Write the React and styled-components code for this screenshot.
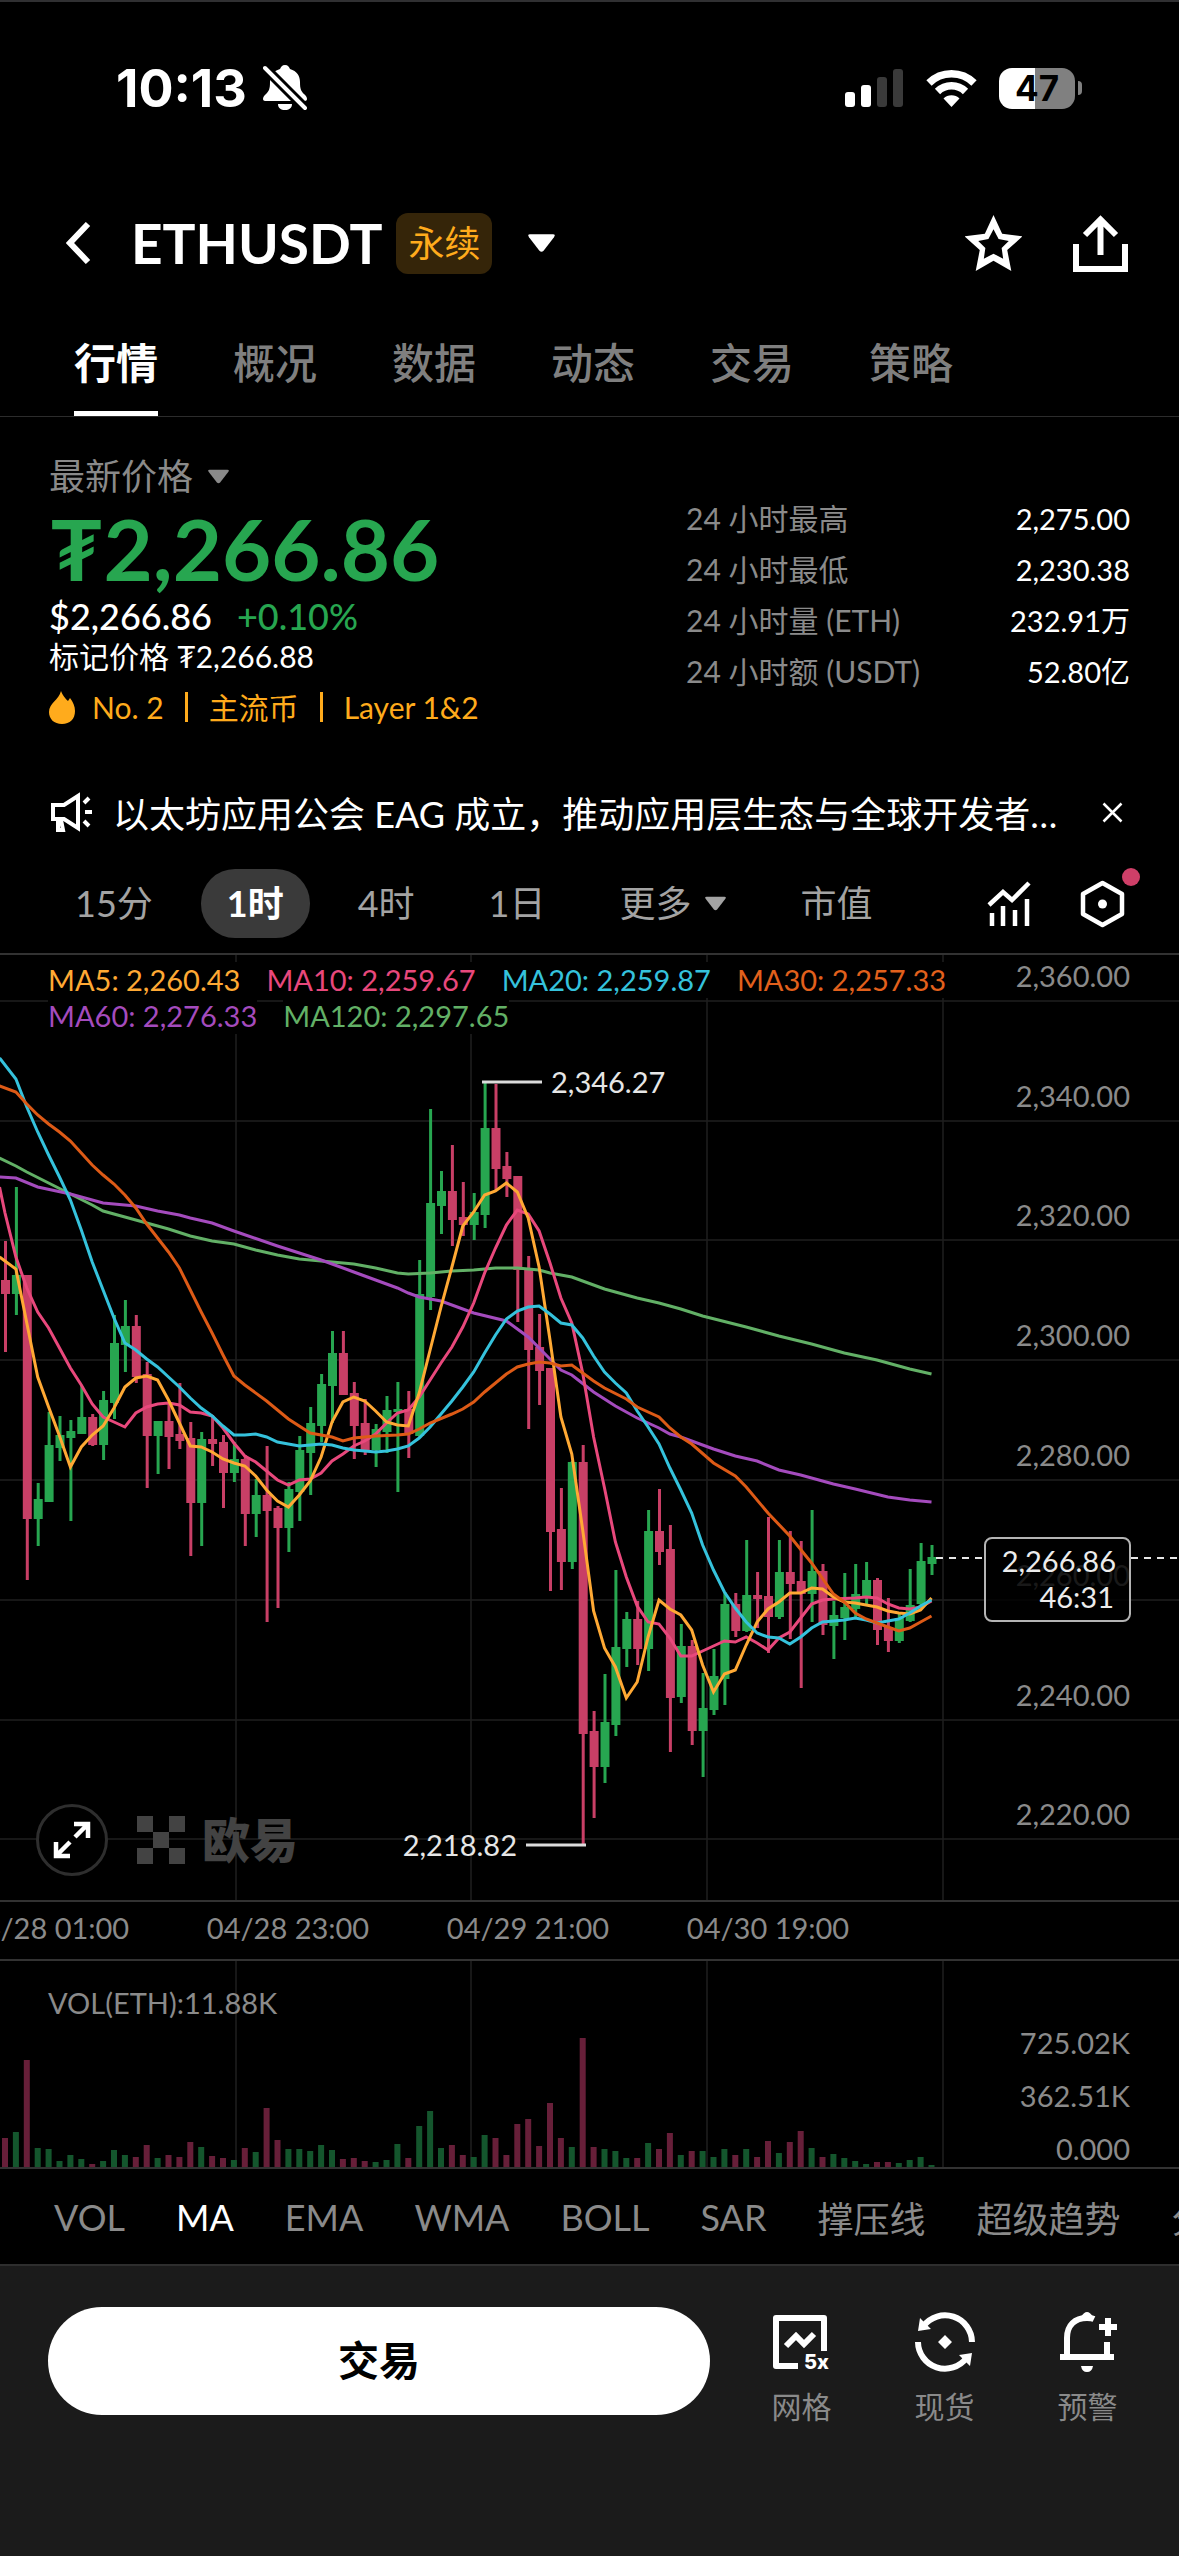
import { useState } from "react";
import styled, { createGlobalStyle } from "styled-components";

const GREEN = "#27a650";
const RED = "#c83f66";
const GREY = "#8a8a8a";
const FONT = 'Lato, "Noto Sans CJK SC", "Noto Sans", sans-serif';

const GlobalStyle = createGlobalStyle`
  * {
    box-sizing: border-box;
  }

  body {
    margin: 0;
    background: #000;
    color: #fff;
    font-family: ${FONT};
    overflow-x: hidden;
  }

  button {
    margin: 0;
    padding: 0;
    border: 0;
    background: none;
    color: inherit;
    font: inherit;
    cursor: pointer;
  }

  svg {
    display: block;
  }
`;

const Page = styled.div`
  display: flex;
  flex-direction: column;
  min-height: 100vh;
  border-top: 2px solid #303032;
`;

const StatusBar = styled.div`
  display: flex;
  align-items: center;
  justify-content: space-between;
  height: 172px;
  padding: 0 97px 0 116px;
  font-family: Inter, sans-serif;
`;

const Clock = styled.div`
  display: flex;
  align-items: center;
  gap: 16px;
  font-size: 52px;
  font-weight: 700;
`;

const StatusIcons = styled.div`
  display: flex;
  align-items: center;
  gap: 22px;
`;

const BatteryWrap = styled.div`
  display: flex;
  align-items: center;
  gap: 3px;
`;

const Battery = styled.div`
  width: 76px;
  height: 41px;
  border-radius: 13px;
  background: linear-gradient(90deg, #fff 47%, #808080 47%);
  color: #000;
  font-size: 35px;
  font-weight: 700;
  line-height: 41px;
  text-align: center;
`;

const BatteryTip = styled.div`
  width: 4px;
  height: 14px;
  border-radius: 0 4px 4px 0;
  background: #808080;
`;

const Header = styled.header`
  display: flex;
  align-items: center;
  justify-content: space-between;
  height: 138px;
  padding: 0 51px 0 66px;
`;

const HeaderGroup = styled.div`
  display: flex;
  align-items: center;
  gap: ${(props) => props.$gap}px;
`;

const Pair = styled.h1`
  margin: 0 14px 0 40px;
  font-size: 55px;
  font-weight: 700;
  line-height: 64px;
`;

const Badge = styled.span`
  margin-right: 36px;
  padding: 0 12px;
  border-radius: 12px;
  background: #352509;
  color: #ffab1c;
  font-size: 36px;
  line-height: 61px;
`;

const Tabs = styled.nav`
  display: flex;
  gap: 75px;
  padding: 0 74px;
  border-bottom: 1px solid #2c2c2c;
`;

const Tab = styled.button`
  padding: 24px 0 21px;
  border-bottom: 5px solid ${(props) => (props.$active ? "#fff" : "transparent")};
  color: ${(props) => (props.$active ? "#fff" : "#7f7f7f")};
  font-size: 42px;
  font-weight: ${(props) => (props.$active ? 700 : 500)};
  line-height: 54px;
`;

const Quote = styled.section`
  display: flex;
  justify-content: space-between;
  align-items: flex-start;
  padding: 34px 49px 0;
`;

const PriceKind = styled.button`
  display: flex;
  align-items: center;
  gap: 15px;
  color: ${GREY};
  font-size: 36px;
  line-height: 50px;
`;

const BigPrice = styled.div`
  color: ${GREEN};
  font-size: 85px;
  font-weight: 700;
  line-height: 94px;
`;

const UsdPrice = styled.div`
  display: flex;
  gap: 25px;
  font-size: 36px;
  font-weight: 500;
  line-height: 42px;
`;

const Change = styled.span`
  color: ${GREEN};
`;

const MarkPrice = styled.div`
  font-size: 30px;
  line-height: 38px;
`;

const Tags = styled.div`
  display: flex;
  align-items: center;
  margin-top: 12px;
  color: #ffab1c;
  font-size: 30px;
  line-height: 40px;
`;

const TagLink = styled.a`
  margin-left: 17px;
  color: inherit;
  text-decoration: none;
`;

const TagBar = styled.span`
  width: 3px;
  height: 30px;
  margin: 0 4px 0 21px;
  background: #ffab1c;
`;

const Stats = styled.dl`
  display: grid;
  grid-template-columns: auto auto;
  width: 444px;
  margin: 42px 0 0;
  font-size: 30px;
  line-height: 51px;
`;

const StatName = styled.dt`
  color: ${GREY};
`;

const StatValue = styled.dd`
  margin: 0;
  font-size: 29px;
  text-align: right;
`;

const Notice = styled.div`
  display: flex;
  align-items: center;
  gap: 20px;
  height: 56px;
  margin-top: 57px;
  padding: 0 56px 0 51px;
  font-size: 36px;
`;

const NoticeText = styled.a`
  flex: 1;
  overflow: hidden;
  color: inherit;
  text-decoration: none;
  white-space: nowrap;
`;

const Toolbar = styled.div`
  display: flex;
  align-items: center;
  justify-content: space-between;
  margin-top: 29px;
  padding: 0 54px 15px 49px;
`;

const Intervals = styled.div`
  display: flex;
  gap: 22px;
`;

const Interval = styled.button`
  display: flex;
  align-items: center;
  gap: 14px;
  padding: 0 26px;
  border-radius: 34px;
  background: ${(props) => (props.$active ? "#3a3a3a" : "transparent")};
  color: ${(props) => (props.$active ? "#fff" : "#a3a3a3")};
  font-size: 36px;
  font-weight: ${(props) => (props.$active ? 700 : 400)};
  line-height: 69px;
`;

const ChartTools = styled.div`
  display: flex;
  gap: 49px;
`;

const SettingsButton = styled.button`
  position: relative;
`;

const RedDot = styled.span`
  position: absolute;
  top: -12px;
  right: -15px;
  width: 18px;
  height: 18px;
  border-radius: 50%;
  background: #cf3f68;
`;

const ChartWrap = styled.section`
  position: relative;
`;

const ChartSvg = styled.svg`
  width: 100%;
  height: auto;
  font-family: ${FONT};
  font-size: 29px;
`;

const Legend = styled.div`
  position: absolute;
  top: 9px;
  left: 48px;
  display: flex;
  flex-wrap: wrap;
  column-gap: 26px;
  width: 78%;
  font-size: 29px;
  line-height: 36px;
  white-space: nowrap;
`;

const LegendItem = styled.span`
  background: #000;
  color: ${(props) => props.$color};
`;

const Watermark = styled.div`
  position: absolute;
  top: 70%;
  left: 36px;
  display: flex;
  align-items: center;
  color: #434343;
  font-size: 48px;
  font-weight: 900;
  line-height: 72px;
`;

const ExpandButton = styled.button`
  display: grid;
  place-items: center;
  width: 72px;
  height: 72px;
  margin-right: 29px;
  border: 3px solid #2e2e2e;
  border-radius: 50%;
  background: #000;
`;

const Brand = styled.span`
  margin-left: 17px;
`;

const Indicators = styled.div`
  display: flex;
  gap: 51px;
  height: 95px;
  padding-left: 54px;
  overflow: hidden;
`;

const Indicator = styled.button`
  flex: none;
  color: ${(props) => (props.$active ? "#fff" : GREY)};
  font-size: 36px;
  white-space: nowrap;
`;

const Footer = styled.footer`
  flex: 1;
  display: flex;
  align-items: flex-start;
  min-height: 292px;
  padding: 41px 20px 0 48px;
  border-top: 2px solid #2e2e2e;
  background: #1b1b1b;
`;

const TradeButton = styled.button`
  flex: 1;
  margin-right: 20px;
  border-radius: 54px;
  background: #fff;
  color: #000;
  font-size: 41px;
  font-weight: 700;
  line-height: 108px;
`;

const Shortcut = styled.button`
  display: flex;
  flex-direction: column;
  align-items: center;
  gap: 12px;
  width: 143px;
  padding-top: 5px;
  color: ${GREY};
  font-size: 30px;
  line-height: 44px;
`;

/* x of candle n is 5 + n * 10.9; rows are [up, high, body top, body bottom, low, volume] */
const candles = [
  [0, 1241, 1280, 1294, 1352, 29], [1, 1187, 1275, 1294, 1315, 35], [0, 1275, 1275, 1519, 1580, 107],
  [1, 1483, 1499, 1519, 1546, 19], [1, 1412, 1445, 1502, 1502, 18], [1, 1416, 1435, 1448, 1461, 6],
  [1, 1420, 1431, 1438, 1521, 12], [1, 1386, 1417, 1434, 1434, 8], [0, 1414, 1417, 1445, 1446, 3],
  [1, 1391, 1400, 1445, 1460, 6], [1, 1315, 1343, 1403, 1419, 17], [1, 1300, 1326, 1345, 1372, 12],
  [0, 1315, 1326, 1377, 1383, 10], [0, 1362, 1374, 1436, 1488, 22], [1, 1421, 1421, 1436, 1474, 9],
  [0, 1403, 1421, 1437, 1469, 12], [0, 1383, 1434, 1441, 1449, 10], [0, 1422, 1438, 1503, 1556, 25],
  [1, 1432, 1439, 1503, 1546, 20], [0, 1415, 1439, 1444, 1466, 11], [0, 1435, 1442, 1473, 1508, 9],
  [1, 1442, 1459, 1473, 1482, 7], [0, 1455, 1459, 1514, 1546, 19], [1, 1479, 1495, 1514, 1537, 15],
  [0, 1446, 1495, 1511, 1622, 59], [0, 1506, 1508, 1528, 1608, 27], [1, 1482, 1489, 1528, 1552, 18],
  [1, 1436, 1450, 1492, 1521, 18], [1, 1407, 1423, 1453, 1495, 16], [1, 1374, 1384, 1426, 1442, 22],
  [1, 1331, 1353, 1386, 1423, 17], [0, 1331, 1353, 1395, 1395, 8], [0, 1382, 1393, 1426, 1459, 9],
  [0, 1399, 1423, 1450, 1455, 6], [1, 1424, 1429, 1450, 1467, 5], [1, 1396, 1410, 1432, 1453, 7],
  [1, 1382, 1409, 1412, 1492, 23], [0, 1391, 1409, 1434, 1458, 9], [1, 1260, 1294, 1436, 1438, 41],
  [1, 1109, 1203, 1297, 1310, 56], [1, 1171, 1191, 1206, 1234, 19], [0, 1145, 1191, 1220, 1246, 22],
  [0, 1182, 1217, 1225, 1236, 12], [1, 1193, 1212, 1225, 1240, 10], [1, 1083, 1128, 1215, 1228, 32],
  [0, 1084, 1128, 1169, 1190, 29], [0, 1152, 1166, 1179, 1197, 12], [0, 1176, 1176, 1270, 1322, 43],
  [0, 1256, 1270, 1350, 1429, 48], [0, 1314, 1347, 1371, 1405, 21], [0, 1368, 1368, 1532, 1591, 64],
  [0, 1488, 1529, 1562, 1590, 29], [1, 1461, 1462, 1562, 1569, 20], [0, 1445, 1462, 1734, 1844, 129],
  [0, 1711, 1731, 1767, 1818, 20], [1, 1674, 1722, 1767, 1783, 18], [1, 1570, 1647, 1725, 1736, 16],
  [1, 1612, 1619, 1649, 1667, 9], [0, 1601, 1619, 1649, 1665, 9], [1, 1510, 1531, 1649, 1671, 24],
  [0, 1489, 1531, 1552, 1565, 18], [0, 1525, 1549, 1698, 1752, 34], [1, 1624, 1646, 1697, 1703, 12],
  [0, 1640, 1646, 1731, 1745, 16], [1, 1673, 1708, 1731, 1777, 16], [1, 1649, 1676, 1710, 1715, 10],
  [1, 1592, 1604, 1679, 1705, 18], [0, 1593, 1604, 1631, 1637, 12], [1, 1540, 1595, 1631, 1632, 18],
  [0, 1572, 1595, 1599, 1628, 10], [0, 1517, 1596, 1617, 1653, 26], [1, 1540, 1572, 1617, 1619, 14],
  [0, 1531, 1572, 1584, 1639, 25], [0, 1541, 1581, 1594, 1688, 36], [1, 1510, 1571, 1594, 1622, 19],
  [0, 1564, 1571, 1625, 1635, 10], [1, 1601, 1615, 1626, 1659, 13], [1, 1573, 1607, 1618, 1640, 9],
  [1, 1564, 1594, 1609, 1618, 6], [1, 1562, 1580, 1597, 1605, 3], [0, 1578, 1580, 1630, 1645, 5],
  [0, 1598, 1627, 1641, 1652, 5], [1, 1613, 1618, 1641, 1643, 4], [1, 1569, 1605, 1621, 1622, 7],
  [1, 1543, 1561, 1604, 1605, 10], [1, 1545, 1557, 1564, 1575, 2],
];

/* [candle, y] pairs, the slower averages need fewer of them */
const averages = [
  {
    color: "#62b066",
    points: [[-0.5, 1158], [1, 1166], [2, 1172], [4, 1183], [6, 1194], [8, 1205], [9, 1211], [11, 1217], [13, 1223], [15, 1229], [17, 1236], [19, 1241], [21, 1244], [23, 1250], [25, 1255], [27, 1259], [30, 1262], [32, 1264], [34, 1268], [36, 1273], [37, 1274], [39, 1273], [41, 1271], [43, 1270], [45, 1268], [47, 1268], [49, 1270], [50, 1273], [52, 1277], [55, 1289], [58, 1298], [60, 1303], [62, 1309], [64, 1316], [68, 1327], [71, 1336], [74, 1344], [77, 1353], [80, 1360], [83, 1369], [85, 1374]],
  },
  {
    color: "#a44bbd",
    points: [[-0.5, 1177], [1, 1178], [3, 1187], [6, 1194], [9, 1203], [12, 1206], [14, 1211], [16, 1215], [17, 1218], [19, 1223], [21, 1231], [25, 1246], [29, 1260], [32, 1272], [34, 1280], [36, 1288], [37, 1293], [38, 1297], [40, 1301], [43, 1313], [46, 1321], [48, 1337], [50, 1359], [51, 1370], [52, 1375], [54, 1392], [56, 1406], [58, 1418], [60, 1428], [61, 1434], [62, 1437], [65, 1449], [67, 1456], [69, 1461], [71, 1470], [73, 1475], [76, 1484], [78, 1489], [81, 1497], [83, 1500], [85, 1502]],
  },
  {
    color: "#e8487c",
    points: [[-0.5, 1187], [0, 1213], [1, 1257], [2, 1288], [3, 1312], [4, 1328], [5, 1348], [6, 1368], [7, 1385], [8, 1404], [9, 1417], [10, 1422], [11, 1427], [12, 1413], [13, 1407], [14, 1404], [15, 1403], [16, 1405], [17, 1412], [18, 1413], [19, 1416], [20, 1428], [21, 1443], [22, 1456], [23, 1462], [24, 1471], [25, 1480], [26, 1485], [27, 1480], [28, 1479], [29, 1473], [30, 1461], [31, 1454], [32, 1446], [33, 1441], [34, 1434], [35, 1423], [36, 1413], [37, 1410], [38, 1397], [39, 1380], [40, 1363], [41, 1347], [42, 1327], [43, 1303], [44, 1273], [45, 1248], [46, 1225], [47, 1210], [48, 1214], [49, 1231], [50, 1263], [51, 1298], [52, 1323], [53, 1373], [54, 1437], [55, 1488], [56, 1542], [57, 1577], [58, 1606], [59, 1622], [60, 1624], [61, 1638], [62, 1656], [63, 1656], [64, 1651], [65, 1646], [66, 1641], [67, 1642], [68, 1637], [69, 1643], [70, 1650], [71, 1638], [72, 1632], [73, 1618], [74, 1604], [75, 1600], [76, 1599], [78, 1598], [79, 1597], [80, 1598], [81, 1604], [82, 1608], [83, 1609], [84, 1607], [85, 1601]],
  },
  {
    color: "#ffa934",
    points: [[-0.5, 1257], [1, 1269], [2, 1323], [3, 1377], [4, 1407], [5, 1436], [6, 1467], [7, 1447], [8, 1435], [9, 1426], [10, 1408], [11, 1387], [12, 1378], [13, 1376], [14, 1380], [15, 1400], [16, 1423], [17, 1446], [18, 1447], [19, 1452], [20, 1459], [21, 1463], [22, 1466], [23, 1476], [24, 1490], [25, 1501], [26, 1507], [27, 1495], [28, 1481], [29, 1457], [30, 1422], [31, 1402], [32, 1397], [33, 1401], [34, 1411], [35, 1422], [36, 1425], [37, 1426], [38, 1393], [39, 1350], [40, 1307], [41, 1267], [42, 1226], [43, 1212], [44, 1195], [45, 1191], [46, 1183], [47, 1192], [48, 1218], [49, 1267], [50, 1340], [51, 1417], [52, 1454], [53, 1530], [54, 1611], [55, 1648], [56, 1667], [57, 1698], [58, 1682], [59, 1637], [60, 1600], [61, 1609], [62, 1615], [63, 1630], [64, 1665], [65, 1692], [66, 1674], [67, 1670], [68, 1645], [69, 1622], [70, 1609], [71, 1602], [72, 1593], [73, 1593], [74, 1588], [75, 1589], [76, 1597], [77, 1602], [78, 1603], [79, 1605], [80, 1607], [81, 1611], [82, 1613], [83, 1614], [84, 1610], [85, 1598]],
  },
  {
    color: "#35c2dc",
    points: [[-0.5, 1058], [1, 1079], [2, 1107], [3, 1132], [4, 1155], [5, 1177], [6, 1200], [7, 1230], [8, 1262], [9, 1290], [10, 1318], [11, 1343], [12, 1350], [13, 1359], [14, 1367], [15, 1377], [16, 1387], [17, 1398], [18, 1408], [19, 1416], [20, 1426], [21, 1435], [22, 1435], [23, 1434], [24, 1437], [25, 1442], [26, 1444], [27, 1446], [28, 1445], [29, 1444], [30, 1445], [31, 1448], [32, 1450], [33, 1451], [34, 1452], [35, 1451], [36, 1449], [37, 1446], [38, 1438], [39, 1427], [40, 1414], [41, 1401], [42, 1387], [43, 1372], [44, 1353], [45, 1335], [46, 1319], [47, 1311], [48, 1307], [49, 1306], [50, 1314], [51, 1323], [52, 1325], [53, 1338], [54, 1356], [55, 1372], [56, 1383], [57, 1393], [58, 1411], [59, 1427], [60, 1444], [61, 1468], [62, 1490], [63, 1513], [64, 1545], [65, 1570], [66, 1592], [67, 1608], [68, 1622], [69, 1633], [70, 1637], [71, 1638], [72, 1644], [73, 1637], [74, 1628], [75, 1622], [76, 1621], [77, 1620], [78, 1618], [79, 1620], [80, 1623], [81, 1621], [82, 1619], [83, 1613], [84, 1606], [85, 1600]],
  },
  {
    color: "#dd5a16",
    points: [[-0.5, 1086], [1, 1092], [2, 1104], [3, 1115], [4, 1124], [5, 1132], [6, 1141], [7, 1153], [8, 1165], [9, 1175], [10, 1184], [11, 1195], [12, 1208], [13, 1224], [14, 1238], [15, 1252], [16, 1268], [17, 1290], [18, 1312], [19, 1333], [20, 1355], [21, 1376], [22, 1385], [24, 1401], [26, 1419], [28, 1433], [30, 1437], [31, 1441], [32, 1438], [34, 1436], [36, 1435], [37, 1434], [38, 1429], [39, 1423], [41, 1414], [42, 1409], [43, 1402], [44, 1392], [46, 1374], [47, 1367], [48, 1364], [49, 1362], [50, 1363], [51, 1366], [52, 1365], [53, 1373], [54, 1381], [55, 1388], [57, 1399], [58, 1407], [60, 1417], [61, 1428], [62, 1437], [63, 1444], [65, 1463], [67, 1476], [68, 1487], [70, 1513], [72, 1536], [74, 1563], [76, 1594], [77, 1602], [78, 1613], [79, 1619], [80, 1623], [81, 1627], [82, 1631], [83, 1628], [84, 1622], [85, 1616]],
  },
];

const legend = [
  ["MA5: 2,260.43", "#ffa934"],
  ["MA10: 2,259.67", "#e8487c"],
  ["MA20: 2,259.87", "#35c2dc"],
  ["MA30: 2,257.33", "#e2601c"],
  ["MA60: 2,276.33", "#a44bbd"],
  ["MA120: 2,297.65", "#62b066"],
];

const stats = [
  ["24 小时最高", "2,275.00"],
  ["24 小时最低", "2,230.38"],
  ["24 小时量 (ETH)", "232.91万"],
  ["24 小时额 (USDT)", "52.80亿"],
];

const gridRows = [1001, 1121, 1240, 1360, 1480, 1600, 1720, 1839];
const priceLabels = ["2,360.00", "2,340.00", "2,320.00", "2,300.00", "2,280.00", "2,260.00", "2,240.00", "2,220.00"];
const gridColumns = [236, 471, 707, 943];
const timeLabels = ["04/28 01:00", "04/28 23:00", "04/29 21:00", "04/30 19:00"];
const volumeLabels = ["725.02K", "362.51K", "0.000"];

const candleX = (index) => 5 + index * 10.9;

function Caret({ width, height, color }) {
  return (
    <svg width={width} height={height} viewBox="0 0 26 17" fill={color}>
      <path d="M2 0h22q3 0 1 3L15 16q-2 2-4 0L1 3q-2-3 1-3z" />
    </svg>
  );
}

function BellOff() {
  return (
    <svg width="44" height="46" viewBox="0 0 44 46">
      <path fill="#fff" d="M22 0c-3 0-4 2-5 4-7 2-10 7-10 13 0 7-1 9-4 12-2 2-3 3-3 5 0 1 1 2 2 2h40c1 0 2-1 2-2 0-2-1-3-3-5-3-3-4-5-4-12 0-6-3-11-10-13-1-2-2-4-5-4zM15 39h14c0 4-3 6-7 6s-7-2-7-6z" />
      <path stroke="#000" strokeWidth="10" d="M0 1l44 44" />
      <path stroke="#fff" strokeWidth="4" strokeLinecap="round" d="M2 3l40 40" />
    </svg>
  );
}

function Signal() {
  return (
    <svg width="59" height="38" viewBox="0 0 59 38" fill="#fff">
      <rect y="23" width="10" height="15" rx="3" />
      <rect x="16" y="16" width="10" height="22" rx="3" />
      <rect x="32" y="8" width="10" height="30" rx="3" fill="#3a3a3a" />
      <rect x="48" width="10" height="38" rx="3" fill="#3a3a3a" />
    </svg>
  );
}

function Wifi() {
  return (
    <svg width="51" height="38" viewBox="0 0 51 38" fill="none" stroke="#fff" strokeWidth="7.5">
      <path d="M3 14a32 32 0 0 1 45 0" />
      <path d="M11.500 22.500a20 20 0 0 1 28 0" />
      <path fill="#fff" stroke="none" d="M25.500 38l-8-8.500a11.500 11.500 0 0 1 16 0z" />
    </svg>
  );
}

function BackIcon() {
  return (
    <svg width="25" height="42" viewBox="0 0 25 42" fill="none" stroke="#fff" strokeWidth="6">
      <path d="M22 2L4 21l18 19" />
    </svg>
  );
}

function StarIcon() {
  return (
    <svg width="57" height="57" viewBox="0 0 56 56" fill="#fff">
      <path
        fillRule="evenodd"
        d="M28 0l8.500 18.500L56.500 21 41.500 34.500l4 20.500L28 45 10.500 55l4-20.500L-.5 21l20-2.500zM28 14l-5 9.500-10 2 7 7-1.500 10.500L28 38l9.500 5L36 32.500l7-7-10-2z"
      />
    </svg>
  );
}

function ShareIcon() {
  return (
    <svg width="55" height="57" viewBox="0 0 55 57" fill="none" stroke="#fff" strokeWidth="6">
      <path d="M3 29v25h49V29M27.500 4v36M12 20L27.500 4.500 43 20" />
    </svg>
  );
}

function FlameIcon() {
  return (
    <svg width="26" height="33" viewBox="0 0 26 33" fill="#ffab1c">
      <path d="M12 0c2 5 4 7 7 10l2-3c3 4 5 8 5 13 0 8-5 13-13 13S0 28 0 21C0 12 10 9 12 0z" />
    </svg>
  );
}

function MegaphoneIcon() {
  return (
    <svg width="42" height="40" viewBox="0 0 42 40" fill="none" stroke="#fff" strokeWidth="4">
      <path d="M2 13h11L27 4v32L13 27H2z" />
      <path d="M7 28v10h5l-2-10M33 11l5-5M34 20h7M33 29l5 5" />
    </svg>
  );
}

function CloseIcon() {
  return (
    <svg width="21" height="21" viewBox="0 0 21 21" stroke="#fff" strokeWidth="2.500">
      <path d="M1.500 1.500l18 18M19.500 1.500l-18 18" />
    </svg>
  );
}

function IndicatorIcon() {
  return (
    <svg width="45" height="46" viewBox="0 0 45 46" fill="none" stroke="#fff" strokeWidth="4.500">
      <path d="M3 24l14-13 9 8L43 2M6 32v13M17 25v20M29 29v16M41 18v27" />
    </svg>
  );
}

function SettingsIcon() {
  return (
    <svg width="45" height="48" viewBox="0 0 45 48" fill="none" stroke="#fff" strokeWidth="4.500">
      <path strokeLinejoin="round" d="M22.500 3l19.500 11v20l-19.500 11L3 34V14z" />
      <circle cx="22.500" cy="24" r="4.500" fill="#fff" stroke="none" />
    </svg>
  );
}

function ExpandIcon() {
  return (
    <svg width="38" height="38" viewBox="0 0 38 38" fill="none" stroke="#fff" strokeWidth="4.500">
      <path d="M21 3h14v14M35 3L22 16M17 35H3V21M3 35l14-14" />
    </svg>
  );
}

function BrandMark() {
  return (
    <svg width="48" height="48" viewBox="0 0 48 48" fill="#434343">
      <path d="M0 0h16v16H0zM32 0h16v16H32zM16 16h16v16H16zM0 32h16v16H0zM32 32h16v16H32z" />
    </svg>
  );
}

function GridIcon() {
  return (
    <svg width="60" height="60" viewBox="-1 -3 60 60" fill="none" stroke="#fff" strokeWidth="6" overflow="visible">
      <path d="M25 51H3V3h48v33" strokeLinejoin="round" />
      <path d="M13 31l10-10 8 8 10-10" />
      <text x="31" y="54" fill="#fff" stroke="none" fontFamily="Inter, sans-serif" fontSize="20" fontWeight="800">
        5x
      </text>
    </svg>
  );
}

function SpotIcon() {
  return (
    <svg width="60" height="60" viewBox="0 0 60 60" fill="none" stroke="#fff" strokeWidth="6">
      <path d="M8.500 14A27 27 0 0 1 57 30M51.500 46A27 27 0 0 1 3 30" />
      <path fill="#fff" stroke="none" d="M5 6l11 11-13 2zM55 54L44 43l13-2zM30 23l7 7-7 7-7-7z" />
    </svg>
  );
}

function AlertIcon() {
  return (
    <svg width="60" height="60" viewBox="-2 0 60 60" fill="none" stroke="#fff" strokeWidth="6">
      <path d="M7 43V26C7 13 15 6 27 6c3 0 5 0 7 1M47 43V30M0 45h54M48 6v18M39 15h18" />
      <path fill="#fff" stroke="none" d="M21 5q6-10 12 0l-6 3zM21 54h12q-1 6-6 6t-6-6z" />
    </svg>
  );
}

function Chart() {
  return (
    <ChartSvg viewBox="0 953 1179 1216">
      <g stroke="#1f1f1f" strokeWidth="1.500">
        {gridRows.map((y) => (
          <path key={y} d={`M0 ${y}H1179`} />
        ))}
        {gridColumns.map((x) => (
          <path key={x} d={`M${x} 953V1901M${x} 1960V2168`} />
        ))}
      </g>
      <path stroke="#323232" strokeWidth="2" d="M0 954H1179M0 1901H1179M0 1960H1179M0 2168H1179" />

      {candles.map(([up, high, top, bottom, low, volume], index) => (
        <g key={index} fill={up ? GREEN : RED}>
          <rect x={candleX(index) - 1} y={high} width="3" height={low - high} />
          <rect x={candleX(index) - 4} y={top} width="9" height={bottom - top} />
          <rect
            x={candleX(index) - 3}
            y={2167 - volume}
            width="6"
            height={volume}
            fill={up ? "#14562d" : "#671f39"}
          />
        </g>
      ))}

      {averages.map((line) => (
        <polyline
          key={line.color}
          fill="none"
          stroke={line.color}
          strokeWidth="3"
          points={line.points.map(([index, y]) => `${candleX(index)},${y}`).join(" ")}
        />
      ))}

      <g stroke="#dcdcdc" strokeWidth="3">
        <path d="M482 1082h60M526 1845h60" />
      </g>
      <g fill="#e6e6e6">
        <text x="551" y="1093">2,346.27</text>
        <text x="517" y="1856" textAnchor="end">2,218.82</text>
      </g>

      <g fill={GREY} textAnchor="end">
        {priceLabels.map((label, index) => (
          <text key={label} x="1130" y={gridRows[index] - 14}>
            {label}
          </text>
        ))}
        {volumeLabels.map((label, index) => (
          <text key={label} x="1130" y={2054 + index * 53}>
            {label}
          </text>
        ))}
      </g>

      <path stroke="#e6e6e6" strokeWidth="2" strokeDasharray="7 6" d="M936 1558h49M1131 1558h48" />
      <rect x="985" y="1538" width="145" height="83" rx="7" fill="#000000d0" stroke="#b4b4b4" strokeWidth="2" />
      <g fill="#ececec" textAnchor="end">
        <text x="1116" y="1572">2,266.86</text>
        <text x="1114" y="1608">46:31</text>
      </g>

      <g fill={GREY} textAnchor="middle">
        {timeLabels.map((label, index) => (
          <text key={label} x={48 + index * 240} y="1939">
            {label}
          </text>
        ))}
      </g>
      <text x="48" y="2014" fill={GREY}>VOL(ETH):11.88K</text>
    </ChartSvg>
  );
}

function App() {
  const [tab, setTab] = useState("行情");
  const [interval, setInterval] = useState("1时");
  const [indicator, setIndicator] = useState("MA");

  return (
    <Page>
      <GlobalStyle />
      <StatusBar>
        <Clock>
          10:13
          <BellOff />
        </Clock>
        <StatusIcons>
          <Signal />
          <Wifi />
          <BatteryWrap>
            <Battery>47</Battery>
            <BatteryTip />
          </BatteryWrap>
        </StatusIcons>
      </StatusBar>

      <Header>
        <HeaderGroup $gap={0}>
          <button aria-label="返回">
            <BackIcon />
          </button>
          <Pair>ETHUSDT</Pair>
          <Badge>永续</Badge>
          <button aria-label="切换">
            <Caret width={27} height={18} color="#fff" />
          </button>
        </HeaderGroup>
        <HeaderGroup $gap={51}>
          <button aria-label="收藏">
            <StarIcon />
          </button>
          <button aria-label="分享">
            <ShareIcon />
          </button>
        </HeaderGroup>
      </Header>

      <Tabs>
        {["行情", "概况", "数据", "动态", "交易", "策略"].map((name) => (
          <Tab key={name} $active={name === tab} onClick={() => setTab(name)}>
            {name}
          </Tab>
        ))}
      </Tabs>

      <Quote>
        <div>
          <PriceKind>
            最新价格
            <Caret width={21} height={15} color={GREY} />
          </PriceKind>
          <BigPrice>₮2,266.86</BigPrice>
          <UsdPrice>
            $2,266.86 <Change>+0.10%</Change>
          </UsdPrice>
          <MarkPrice>标记价格 ₮2,266.88</MarkPrice>
          <Tags>
            <FlameIcon />
            <TagLink href="#rank">No. 2</TagLink>
            <TagBar />
            <TagLink href="#main">主流币</TagLink>
            <TagBar />
            <TagLink href="#layer">Layer 1&amp;2</TagLink>
          </Tags>
        </div>
        <Stats>
          {stats.map(([name, value]) => [
            <StatName key={name}>{name}</StatName>,
            <StatValue key={value}>{value}</StatValue>,
          ])}
        </Stats>
      </Quote>

      <Notice>
        <MegaphoneIcon />
        <NoticeText href="#notice">以太坊应用公会 EAG 成立，推动应用层生态与全球开发者…</NoticeText>
        <button aria-label="关闭">
          <CloseIcon />
        </button>
      </Notice>

      <Toolbar>
        <Intervals>
          {["15分", "1时", "4时", "1日", "更多", "市值"].map((name) => (
            <Interval key={name} $active={name === interval} onClick={() => setInterval(name)}>
              {name}
              {name === "更多" && <Caret width={21} height={15} color="#a3a3a3" />}
            </Interval>
          ))}
        </Intervals>
        <ChartTools>
          <button aria-label="指标">
            <IndicatorIcon />
          </button>
          <SettingsButton aria-label="设置">
            <SettingsIcon />
            <RedDot />
          </SettingsButton>
        </ChartTools>
      </Toolbar>

      <ChartWrap>
        <Chart />
        <Legend>
          {legend.map(([text, color]) => (
            <LegendItem key={text} $color={color}>
              {text}
            </LegendItem>
          ))}
        </Legend>
        <Watermark>
          <ExpandButton aria-label="全屏">
            <ExpandIcon />
          </ExpandButton>
          <BrandMark />
          <Brand>欧易</Brand>
        </Watermark>
      </ChartWrap>

      <Indicators>
        {["VOL", "MA", "EMA", "WMA", "BOLL", "SAR", "撑压线", "超级趋势", "分时"].map((name) => (
          <Indicator key={name} $active={name === indicator} onClick={() => setIndicator(name)}>
            {name}
          </Indicator>
        ))}
      </Indicators>

      <Footer>
        <TradeButton>交易</TradeButton>
        <Shortcut>
          <GridIcon />
          网格
        </Shortcut>
        <Shortcut>
          <SpotIcon />
          现货
        </Shortcut>
        <Shortcut>
          <AlertIcon />
          预警
        </Shortcut>
      </Footer>
    </Page>
  );
}

export default App;
